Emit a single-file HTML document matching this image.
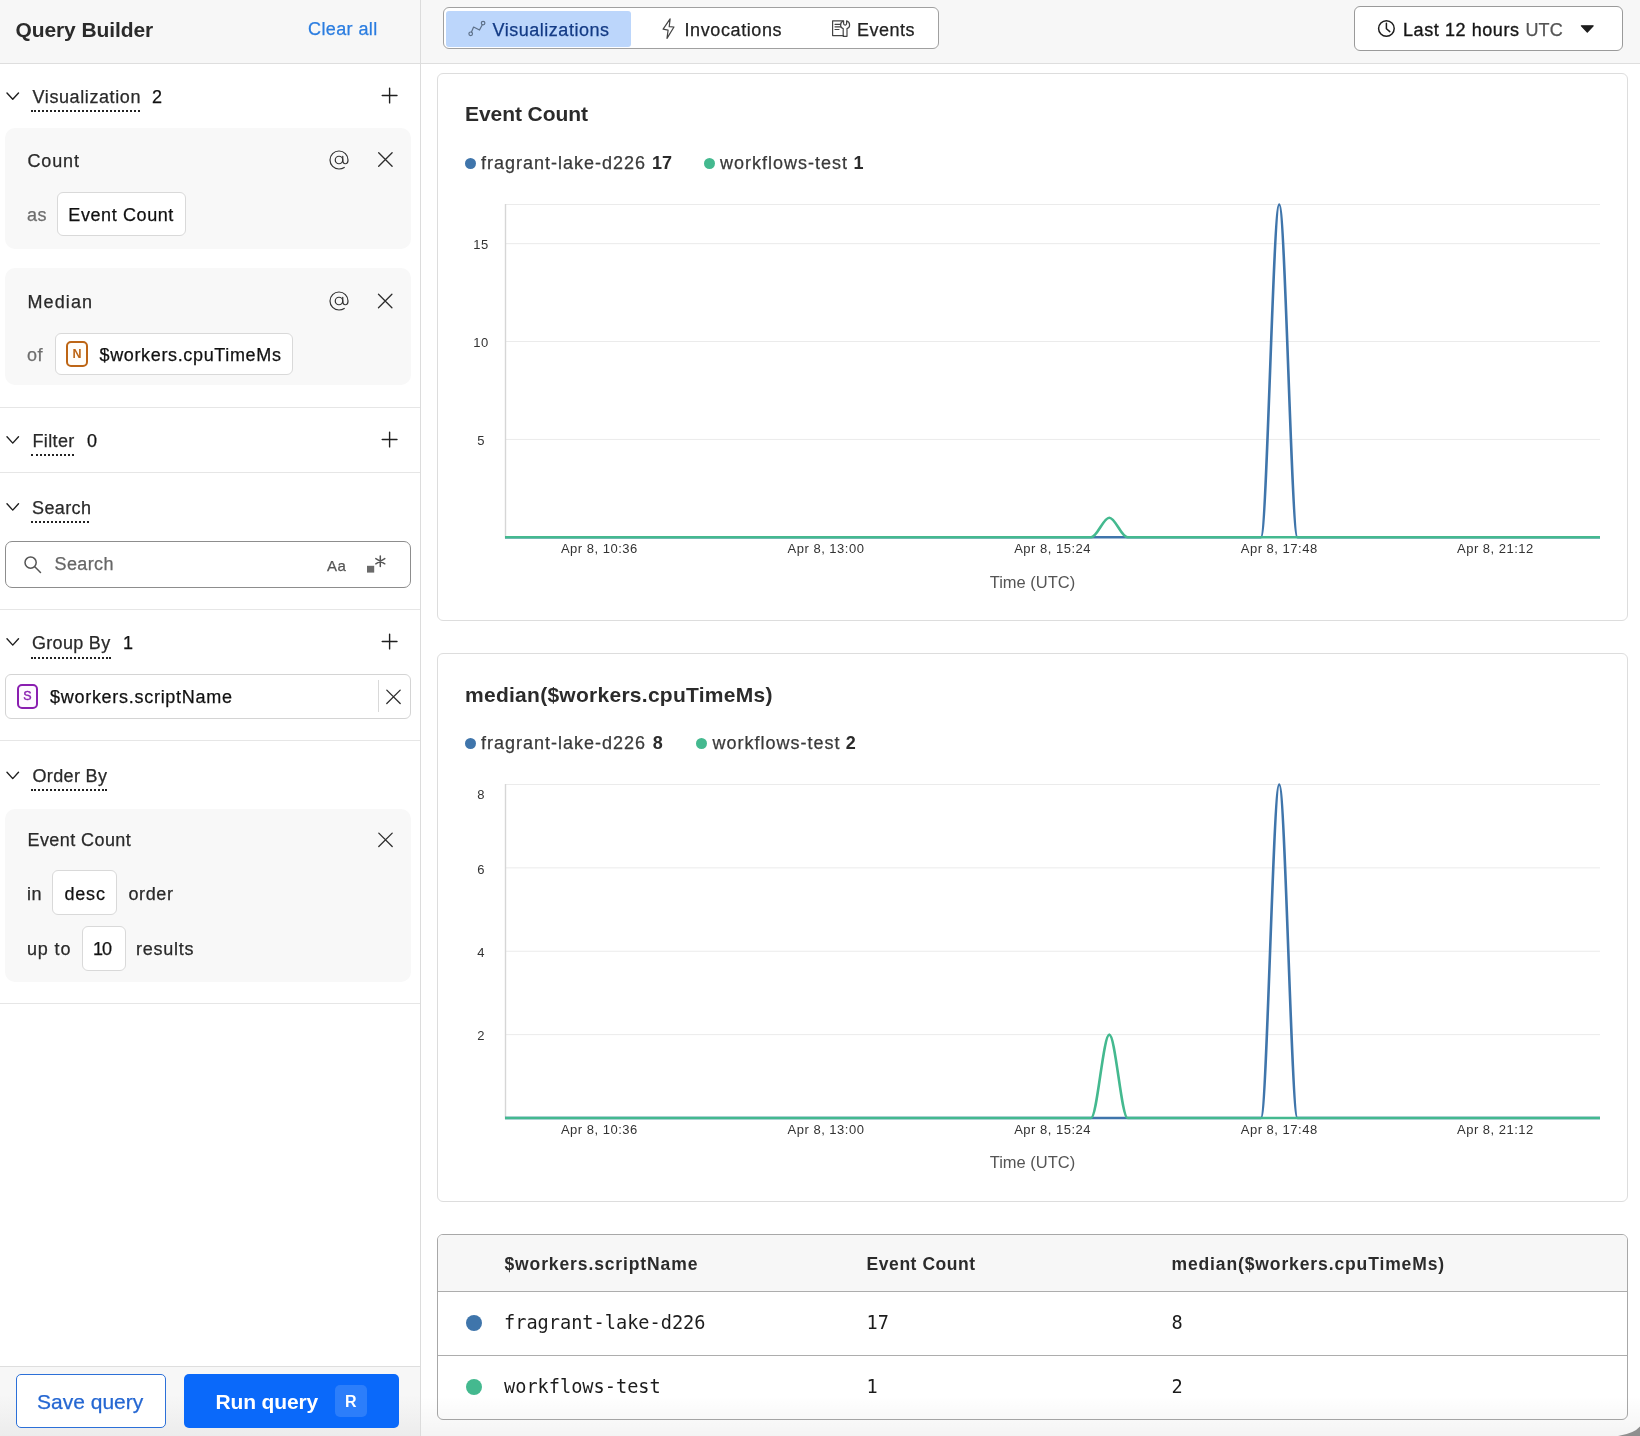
<!DOCTYPE html>
<html lang="en">
<head>
<meta charset="utf-8">
<title>Query Builder</title>
<style>
*{box-sizing:border-box;margin:0;padding:0}
html,body{width:1640px;height:1436px;overflow:hidden;background:#fff}
body{position:relative;will-change:transform;font-family:"Liberation Sans",Arial,sans-serif;font-size:18px;color:#222;-webkit-font-smoothing:antialiased}
.abs,.t,svg.i{position:absolute}
.t{white-space:nowrap;line-height:20px;font-size:18px;letter-spacing:.6px;color:#2a2a2a;-webkit-text-stroke:.25px currentColor}
.t.b,.t.m{-webkit-text-stroke:0}
.b{font-weight:700}
.g{color:#6e6e6e}
svg.i{overflow:visible;fill:none;stroke:#1f1f1f;stroke-width:1.4;stroke-linecap:round;stroke-linejoin:round}
svg.at{stroke-width:13;stroke:#333}
/* left panel */
#side{left:0;top:0;width:421px;height:1436px;border-right:1px solid #dcdcdc;background:#fff}
#sidehead{left:0;top:0;width:420px;height:64px;background:#f7f7f7;border-bottom:1px solid #dedede}
.hr{left:0;width:420px;height:1px;background:#e6e6e6}
.card{left:5px;width:406px;background:#f8f8f8;border-radius:10px}
.inp{background:#fff;border:1px solid #d9d9d9;border-radius:6px}
.badge{border:2px solid;border-radius:5px;font-size:12px;font-weight:700;line-height:23px;text-align:center;letter-spacing:0}
i.dot{display:block;height:0;border-top:2px dotted #222}
#sidefoot{left:0;top:1366px;width:420px;height:70px;background:linear-gradient(to bottom,#f7f7f7 40%,#ececec 100%);border-top:1px solid #dedede}
/* main */
#tophead{left:421px;top:0;width:1219px;height:64px;background:#f7f7f7;border-bottom:1px solid #dedede}
.panel{left:437px;width:1191px;background:#fff;border:1px solid #dddddd;border-radius:6px}
.th{font-size:17.5px;letter-spacing:.88px;color:#2b2b2b}
.m{font-family:"DejaVu Sans Mono","Liberation Mono",monospace;font-size:18.6px;line-height:22px;letter-spacing:0;color:#1c1c1c}
</style>
</head>
<body>
<!--SIDE-->
<div id="side" class="abs">
  <div id="sidehead" class="abs"></div>
  <div class="t b" style="left:15.5px;top:17.7px;font-size:21px;line-height:24px;letter-spacing:-.1px;color:#2b2b2b">Query Builder</div>
  <div class="t" style="left:308px;top:19.3px;color:#2b7de0;letter-spacing:.4px">Clear all</div>

  <!-- Visualization -->
  <div class="t" style="left:32.5px;top:86.8px">Visualization</div>
  <i class="abs dot" style="left:31px;top:109.5px;width:109px"></i>
  <div class="t" style="left:152px;top:86.8px;color:#111">2</div>

  <div class="abs card" style="top:128px;height:120.5px"></div>
  <div class="t" style="left:27.5px;top:150.8px;letter-spacing:.85px">Count</div>
  <svg class="i at" style="left:326.6px;top:147.5px" width="24" height="24" viewBox="0 0 256 256"><circle cx="128" cy="128" r="40"/><path d="M184 208c-15 10-36 16-56 16a96 96 0 1 1 96-96c0 22-8 40-28 40s-28-18-28-40V88"/></svg>
  <div class="t g" style="left:27px;top:204.8px">as</div>
  <div class="abs inp" style="left:57px;top:192px;width:128.5px;height:44px"></div>
  <div class="t" style="left:68.3px;top:204.8px;color:#111">Event Count</div>

  <div class="abs card" style="top:268px;height:117px"></div>
  <div class="t" style="left:27.5px;top:291.8px;letter-spacing:1.1px">Median</div>
  <svg class="i at" style="left:326.6px;top:288.5px" width="24" height="24" viewBox="0 0 256 256"><circle cx="128" cy="128" r="40"/><path d="M184 208c-15 10-36 16-56 16a96 96 0 1 1 96-96c0 22-8 40-28 40s-28-18-28-40V88"/></svg>
  <div class="t g" style="left:27px;top:344.8px">of</div>
  <div class="abs inp" style="left:55px;top:333px;width:237.5px;height:41.5px"></div>
  <div class="abs badge" style="left:66px;top:341px;width:22px;height:26px;border-color:#bd6515;color:#bd6515;background:#fffdf9;font-size:12.5px;line-height:22px">N</div>
  <div class="t" style="left:99.5px;top:344.8px;color:#111;letter-spacing:.65px">$workers.cpuTimeMs</div>

  <div class="abs hr" style="top:407px"></div>
  <!-- Filter -->
  <div class="t" style="left:32.5px;top:430.8px;letter-spacing:.35px">Filter</div>
  <i class="abs dot" style="left:31px;top:454px;width:43px"></i>
  <div class="t" style="left:87px;top:430.8px;color:#111">0</div>

  <div class="abs hr" style="top:472px"></div>
  <!-- Search -->
  <div class="t" style="left:32px;top:497.8px;letter-spacing:.4px">Search</div>
  <i class="abs dot" style="left:31px;top:520.5px;width:58px"></i>
  <div class="abs inp" style="left:5px;top:541px;width:406px;height:47px;border-color:#8d8d8d;border-radius:7px"></div>
  <svg class="i" style="left:24px;top:555.5px;stroke:#555;stroke-width:1.5" width="18" height="18"><circle cx="6.6" cy="6.6" r="5.6"/><path d="M10.8 10.8l5.7 5.7"/></svg>
  <div class="t" style="left:54.5px;top:553.8px;color:#666;letter-spacing:.4px">Search</div>
  <div class="t" style="left:327px;top:556px;font-size:15px;color:#555;letter-spacing:.4px">Aa</div>
  <svg class="i" style="left:367px;top:555px;stroke:#555;stroke-width:1.5" width="20" height="19"><rect x="0" y="10.8" width="7.2" height="6.8" fill="#6a6a6a" stroke="none"/><path d="M13.3 1v10.4M8.8 3.6l9 5.2M17.8 3.6l-9 5.2"/></svg>

  <div class="abs hr" style="top:609px"></div>
  <!-- Group By -->
  <div class="t" style="left:32px;top:632.8px;letter-spacing:.3px">Group By</div>
  <i class="abs dot" style="left:31px;top:656.5px;width:80px"></i>
  <div class="t" style="left:123px;top:632.8px;color:#111">1</div>
  <div class="abs inp" style="left:5px;top:674px;width:406px;height:45px;border-color:#d4d4d4"></div>
  <div class="abs badge" style="left:17px;top:684px;width:21px;height:25px;border-color:#8a1fb0;color:#8a1fb0;background:#fefaff;font-size:12.5px;font-weight:400;line-height:20px;-webkit-text-stroke:.4px #8a1fb0">S</div>
  <div class="t" style="left:50px;top:686.8px;color:#111;letter-spacing:.72px">$workers.scriptName</div>
  <div class="abs" style="left:378px;top:680px;width:1px;height:32px;background:#d9d9d9"></div>

  <div class="abs hr" style="top:740px"></div>
  <!-- Order By -->
  <div class="t" style="left:32.5px;top:766.3px;letter-spacing:.35px">Order By</div>
  <i class="abs dot" style="left:31px;top:789px;width:76px"></i>
  <div class="abs card" style="top:809px;height:172.5px"></div>
  <div class="t" style="left:27.5px;top:829.8px;letter-spacing:.42px">Event Count</div>
  <div class="t" style="left:27px;top:883.8px">in</div>
  <div class="abs inp" style="left:52px;top:870px;width:64.5px;height:44.5px"></div>
  <div class="t" style="left:64.5px;top:883.8px;color:#111;letter-spacing:.8px">desc</div>
  <div class="t" style="left:128.5px;top:883.8px">order</div>
  <div class="t" style="left:27px;top:939.3px;letter-spacing:.85px">up to</div>
  <div class="abs inp" style="left:82px;top:926px;width:43.5px;height:44.5px"></div>
  <div class="t" style="left:93px;top:939.3px;color:#111;letter-spacing:-1px">10</div>
  <div class="t" style="left:136px;top:939.3px;letter-spacing:.75px">results</div>

  <div class="abs hr" style="top:1003px"></div>

  <svg class="i" style="left:0;top:0" width="420" height="1436">
    <path d="M7 93l5.75 6.3L18.5 93M7 436.8l5.75 6.3 5.75-6.3M7 503.8l5.75 6.3 5.75-6.3M7 638.8l5.75 6.3 5.75-6.3M7 772.3l5.75 6.3 5.75-6.3"/>
    <path d="M382.2 95.5h14.8M389.6 88.1v14.8M382.2 439.5h14.8M389.6 432.1v14.8M382.2 641.5h14.8M389.6 634.1v14.8"/>
    <path stroke-width="1.3" stroke="#2e2e2e" d="M378.7 152.8l13.4 13.4M392.1 152.8l-13.4 13.4M378.5 294.3l13.4 13.4M391.9 294.3l-13.4 13.4M386.8 690.1l13.4 13.4M400.2 690.1l-13.4 13.4M378.8 833.1l13.4 13.4M392.2 833.1l-13.4 13.4"/>
  </svg>
  <div id="sidefoot" class="abs"></div>
  <div class="abs" style="left:16px;top:1374px;width:150px;height:54px;border:1.5px solid #2c70d8;border-radius:5px;background:#fff"></div>
  <div class="t" style="left:37px;top:1389.5px;font-size:21px;line-height:24px;letter-spacing:0;color:#2567d2">Save query</div>
  <div class="abs" style="left:184px;top:1374px;width:215px;height:54px;border-radius:5px;background:#0a69fa"></div>
  <div class="t b" style="left:215.5px;top:1389.5px;font-size:21px;line-height:24px;letter-spacing:-.15px;color:#fff">Run query</div>
  <div class="abs" style="left:335px;top:1385px;width:32px;height:32px;border-radius:5px;background:rgba(255,255,255,.14)"></div>
  <div class="t b" style="left:345px;top:1391.5px;font-size:16px;color:#fff;letter-spacing:0">R</div>
</div>
<!--/SIDE-->
<!--MAIN-->
<div id="tophead" class="abs"></div>
<div class="abs" style="left:443px;top:7.4px;width:496px;height:42px;border:1px solid #a0a0a0;border-radius:6px;background:#fff"></div>
<div class="abs" style="left:446px;top:11px;width:185px;height:36px;border-radius:3px;background:#bcd6fb"></div>
<div class="t" style="left:492.5px;top:19.8px;color:#133a84;letter-spacing:.52px">Visualizations</div>
<div class="t" style="left:684.5px;top:19.8px;color:#222;letter-spacing:.6px">Invocations</div>
<div class="t" style="left:857px;top:19.8px;color:#222;letter-spacing:.5px">Events</div>
<div class="abs" style="left:1354px;top:6px;width:269px;height:45px;border:1px solid #9a9a9a;border-radius:6px;background:#fff"></div>
<svg class="i" style="left:421px;top:0" width="1219" height="64" viewBox="421 0 1219 64">
  <g stroke="#5d7088" stroke-width="1.2"><circle cx="470.7" cy="33.8" r="1.8"/><circle cx="483.1" cy="23.1" r="1.8"/><path d="M471.5 32.1l2.1-5.1 5.9 3 2.8-5.2"/></g>
  <path d="M670.1 18.9l-7 10.3 5 .85-1.1 8.35 6.95-11.4-4.75-.3z" stroke="#444" stroke-width="1.2"/>
  <g stroke="#444" stroke-width="1.2"><path d="M843 20.8h-10.4v14.8h10.9M835 24.3h5.6M835 26.8h5.6M835 29.5h4"/><path d="M843.6 20.9v2.7a1.5 1.5 0 0 0 3 0v-2.7c2 .6 3 2.3 3 4 0 1.800-1 3.100-2.600 3.700v7.700h-3.800v-7.700c-1.600-.6-2.600-1.900-2.600-3.700 0-1.700 1-3.400 3-4z"/></g>
  <g stroke="#1d1d1d" stroke-width="1.5"><circle cx="1386.4" cy="28.5" r="7.8"/><path d="M1386.4 23.3v5.4l3.4 2.9"/></g>
  <path d="M1581.4 25.800h11.800l-5.900 6.200z" fill="#1d1d1d" stroke="#1d1d1d" stroke-width="1.2"/>
</svg>
<div class="t" style="left:1403px;top:19.8px;color:#151515;letter-spacing:.58px;-webkit-text-stroke:.35px #151515">Last 12 hours</div>
<div class="t" style="left:1525.5px;top:19.8px;color:#555;letter-spacing:.1px">UTC</div>

<div class="abs panel" style="top:73px;height:548px"></div>
<div class="t b" style="left:465px;top:101.9px;font-size:21px;line-height:24px;letter-spacing:-0.07px;color:#2b2b2b">Event Count</div>
<i class="abs" style="left:465px;top:157.5px;width:11px;height:11px;border-radius:50%;background:#3f75ab"></i>
<div class="t" style="left:481px;top:152.8px;letter-spacing:1px;color:#3a3a3a">fragrant-lake-d226</div>
<div class="t b" style="left:652px;top:152.8px;letter-spacing:0;color:#2b2b2b">17</div>
<i class="abs" style="left:704px;top:157.5px;width:11px;height:11px;border-radius:50%;background:#44b98f"></i>
<div class="t" style="left:720px;top:152.8px;letter-spacing:1px;color:#3a3a3a">workflows-test</div>
<div class="t b" style="left:853.5px;top:152.8px;letter-spacing:0;color:#2b2b2b">1</div>
<svg class="abs" style="left:437px;top:73px;overflow:visible" width="1191" height="548" viewBox="437 73 1191 548">
<g stroke="#ebebeb" stroke-width="1" fill="none">
<path d="M506 243.65H1600"/>
<path d="M506 341.54H1600"/>
<path d="M506 439.42H1600"/>
<path d="M506 204.5H1600"/>
</g>
<path d="M505.5 204.0V538.3" stroke="#d6d6d6" stroke-width="1.4" fill="none"/>
<g font-family="Liberation Sans,Arial,sans-serif" font-size="13" fill="#333" text-anchor="middle" letter-spacing=".5">
<text x="481" y="249">15</text>
<text x="481" y="347">10</text>
<text x="481" y="445">5</text>
<text x="481" y="0"></text>
<text x="599.3" y="553.2">Apr 8, 10:36</text>
<text x="826" y="553.2">Apr 8, 13:00</text>
<text x="1052.6" y="553.2">Apr 8, 15:24</text>
<text x="1279.2" y="553.2">Apr 8, 17:48</text>
<text x="1495.4" y="553.2">Apr 8, 21:12</text>
</g>
<text x="1032.5" y="588" font-family="Liberation Sans,Arial,sans-serif" font-size="16.5" fill="#555" text-anchor="middle">Time (UTC)</text>
<path d="M505 537.3H1260.95C1267.03 537.3 1273.12 204.5 1279.2 204.5C1285.28 204.5 1291.37 537.3 1297.45 537.3H1600" stroke="#3f75ab" stroke-width="2.6" fill="none" stroke-linejoin="round"/>
<path d="M505 537.3H1091.05C1097.13 537.3 1103.22 517.72 1109.3 517.72C1115.38 517.72 1121.47 537.3 1127.55 537.3H1600" stroke="#44b98f" stroke-width="2.6" fill="none" stroke-linejoin="round"/>
</svg>
<div class="abs panel" style="top:653px;height:549px"></div>
<div class="t b" style="left:465px;top:682.6px;font-size:21px;line-height:24px;letter-spacing:0.27px;color:#2b2b2b">median($workers.cpuTimeMs)</div>
<i class="abs" style="left:465px;top:737.5px;width:11px;height:11px;border-radius:50%;background:#3f75ab"></i>
<div class="t" style="left:481px;top:732.8px;letter-spacing:1px;color:#3a3a3a">fragrant-lake-d226</div>
<div class="t b" style="left:652.8px;top:732.8px;letter-spacing:0;color:#2b2b2b">8</div>
<i class="abs" style="left:696px;top:737.5px;width:11px;height:11px;border-radius:50%;background:#44b98f"></i>
<div class="t" style="left:712.5px;top:732.8px;letter-spacing:1px;color:#3a3a3a">workflows-test</div>
<div class="t b" style="left:845.8px;top:732.8px;letter-spacing:0;color:#2b2b2b">2</div>
<svg class="abs" style="left:437px;top:653px;overflow:visible" width="1191" height="548" viewBox="437 653 1191 548">
<g stroke="#ebebeb" stroke-width="1" fill="none">
<path d="M506 784.5H1600"/>
<path d="M506 867.88H1600"/>
<path d="M506 951.25H1600"/>
<path d="M506 1034.62H1600"/>
</g>
<path d="M505.5 784.0V1119.0" stroke="#d6d6d6" stroke-width="1.4" fill="none"/>
<g font-family="Liberation Sans,Arial,sans-serif" font-size="13" fill="#333" text-anchor="middle" letter-spacing=".5">
<text x="481" y="799.2">8</text>
<text x="481" y="873.58">6</text>
<text x="481" y="956.95">4</text>
<text x="481" y="1040.32">2</text>
<text x="599.3" y="1133.9">Apr 8, 10:36</text>
<text x="826" y="1133.9">Apr 8, 13:00</text>
<text x="1052.6" y="1133.9">Apr 8, 15:24</text>
<text x="1279.2" y="1133.9">Apr 8, 17:48</text>
<text x="1495.4" y="1133.9">Apr 8, 21:12</text>
</g>
<text x="1032.5" y="1168" font-family="Liberation Sans,Arial,sans-serif" font-size="16.5" fill="#555" text-anchor="middle">Time (UTC)</text>
<path d="M505 1118.0H1260.95C1267.03 1118.0 1273.12 784.5 1279.2 784.5C1285.28 784.5 1291.37 1118.0 1297.45 1118.0H1600" stroke="#3f75ab" stroke-width="2.6" fill="none" stroke-linejoin="round"/>
<path d="M505 1118.0H1091.05C1097.13 1118.0 1103.22 1034.62 1109.3 1034.62C1115.38 1034.62 1121.47 1118.0 1127.55 1118.0H1600" stroke="#44b98f" stroke-width="2.6" fill="none" stroke-linejoin="round"/>
</svg>
<div class="abs" style="left:437px;top:1234px;width:1191px;height:186px;border:1px solid #a8a8a8;border-radius:6px;background:#fff;overflow:hidden">
  <div class="abs" style="left:0;top:0;width:1189px;height:57px;background:#f7f7f7;border-bottom:1px solid #adadad"></div>
  <div class="abs" style="left:0;top:120px;width:1189px;height:1px;background:#adadad"></div>
</div>
<div class="t b th" style="left:504.5px;top:1254px">$workers.scriptName</div>
<div class="t b th" style="left:866.6px;top:1254px;letter-spacing:.55px">Event Count</div>
<div class="t b th" style="left:1171.5px;top:1254px">median($workers.cpuTimeMs)</div>
<i class="abs" style="left:466px;top:1315px;width:16px;height:16px;border-radius:50%;background:#3f75ab"></i>
<i class="abs" style="left:466px;top:1379px;width:16px;height:16px;border-radius:50%;background:#44b98f"></i>
<div class="t m" style="left:504px;top:1311.9px">fragrant-lake-d226</div>
<div class="t m" style="left:866.5px;top:1311.9px">17</div>
<div class="t m" style="left:1171.5px;top:1311.9px">8</div>
<div class="t m" style="left:504px;top:1375.9px">workflows-test</div>
<div class="t m" style="left:866.5px;top:1375.9px">1</div>
<div class="t m" style="left:1171.5px;top:1375.9px">2</div>
<div class="abs" style="left:421px;top:1396px;width:1219px;height:40px;background:linear-gradient(to bottom,rgba(0,0,0,0),rgba(0,0,0,.045));pointer-events:none"></div>
<svg class="abs" style="left:1610px;top:1420px" width="30" height="16" viewBox="1610 1420 30 16"><path d="M1640 1426.500Q1634 1433.500 1618 1436H1640Z" fill="#8f8f8f"/></svg>

<!--/MAIN-->
</body>
</html>
